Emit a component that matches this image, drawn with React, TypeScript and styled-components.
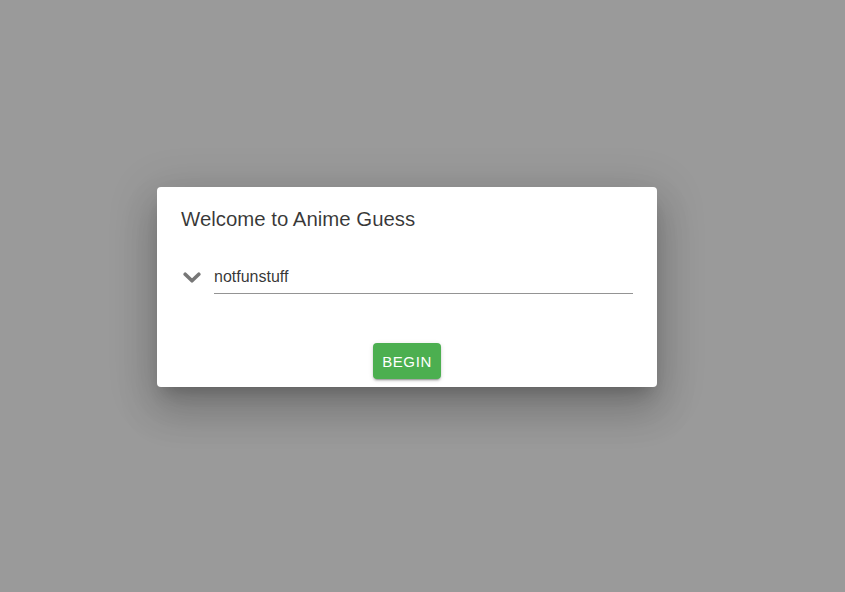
import React from "react";
import styled, { createGlobalStyle } from "styled-components";

const Global = createGlobalStyle`
  html, body { margin: 0; padding: 0; }
  body {
    background: #9a9a9a;
    font-family: "Liberation Sans", Arial, sans-serif;
    width: 845px;
    height: 592px;
    overflow: hidden;
  }
`;

const Backdrop = styled.div`
  width: 845px;
  height: 592px;
  background: #9a9a9a;
  display: flex;
  align-items: flex-start;
  padding: 187px 0 0 157px;
  box-sizing: border-box;
`;

const Dialog = styled.div`
  width: 500px;
  height: 200px;
  background: #fff;
  border-radius: 4px;
  box-shadow: 0px 11px 15px -7px rgba(0, 0, 0, 0.2),
    0px 24px 38px 3px rgba(0, 0, 0, 0.14), 0px 9px 46px 8px rgba(0, 0, 0, 0.12);
  display: flex;
  flex-direction: column;
  box-sizing: border-box;
`;

const Title = styled.h2`
  margin: 0;
  padding: 16px 24px;
  font-size: 20.4px;
  line-height: 32px;
  font-weight: 400;
  color: rgba(0, 0, 0, 0.78);
`;

const Content = styled.div`
  flex: 1;
  padding: 14px 24px 0 24px;
`;

const FieldRow = styled.div`
  display: flex;
  align-items: center;
  gap: 11px;
`;

const IconBox = styled.div`
  width: 22px;
  display: flex;
  justify-content: center;
  color: #777;
  margin-bottom: 3px;
`;

const Field = styled.input`
  flex: 1;
  border: none;
  border-bottom: 1px solid rgba(0, 0, 0, 0.42);
  outline: none;
  padding: 2px 0 7px;
  height: 19px;
  font-family: "Liberation Sans", Arial, sans-serif;
  font-size: 16px;
  color: rgba(0, 0, 0, 0.8);
  background: transparent;
`;

const Actions = styled.div`
  display: flex;
  justify-content: center;
  padding: 8px;
`;

const Button = styled.button`
  height: 36px;
  min-width: 64px;
  padding: 0 9px;
  border: none;
  border-radius: 4px;
  background: #4caf50;
  color: #fff;
  font-family: "Liberation Sans", Arial, sans-serif;
  font-size: 15px;
  font-weight: 500;
  letter-spacing: 0.6px;
  text-transform: uppercase;
  box-shadow: 0px 3px 1px -2px rgba(0, 0, 0, 0.2),
    0px 2px 2px 0px rgba(0, 0, 0, 0.14), 0px 1px 5px 0px rgba(0, 0, 0, 0.12);
  cursor: pointer;
`;

const Chevron = () => (
  <svg width="18" height="12" viewBox="0 0 18 12">
    <path
      d="M2.2 2.2 L9 8.8 L15.8 2.2"
      fill="none"
      stroke="currentColor"
      strokeWidth="3.6"
      strokeLinecap="round"
      strokeLinejoin="round"
    />
  </svg>
);

export default function App() {
  return (
    <>
      <Global />
      <Backdrop>
        <Dialog>
          <Title>Welcome to Anime Guess</Title>
          <Content>
            <FieldRow>
              <IconBox>
                <Chevron />
              </IconBox>
              <Field defaultValue="notfunstuff" />
            </FieldRow>
          </Content>
          <Actions>
            <Button>Begin</Button>
          </Actions>
        </Dialog>
      </Backdrop>
    </>
  );
}
